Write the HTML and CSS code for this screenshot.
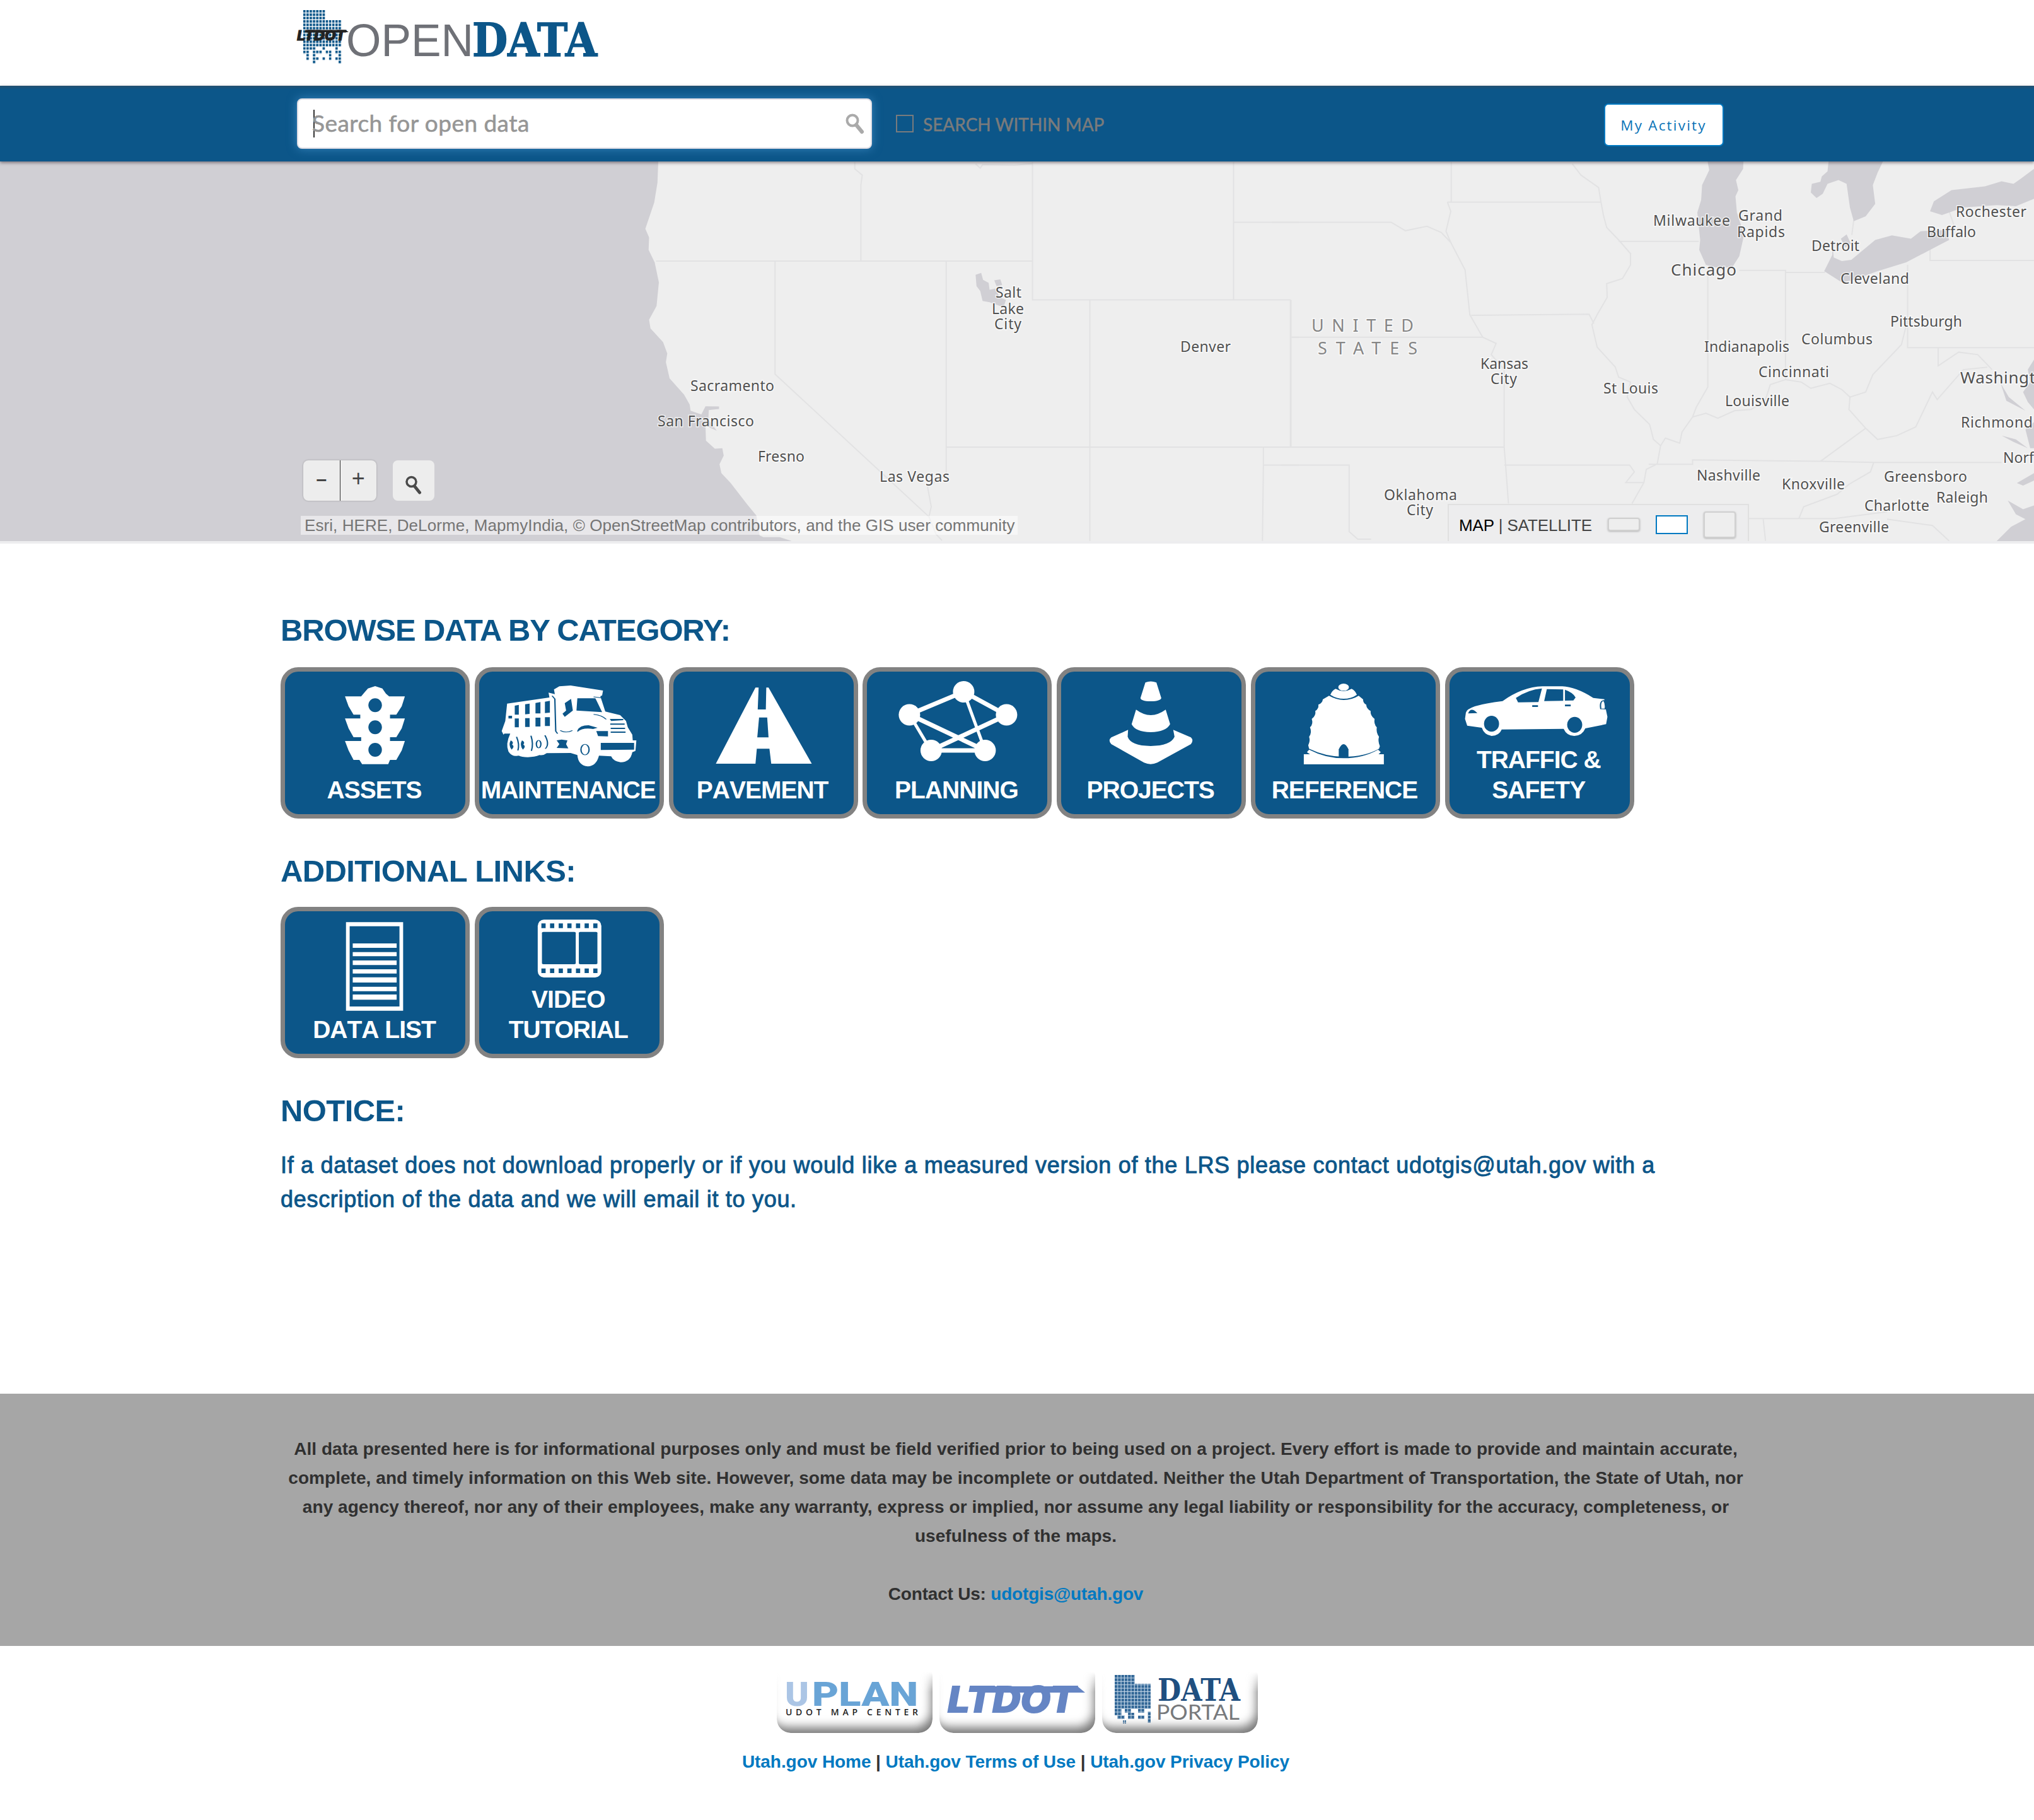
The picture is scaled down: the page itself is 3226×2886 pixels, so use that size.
FILE: index.html
```html
<!DOCTYPE html>
<html lang="en">
<head>
<meta charset="utf-8">
<title>UDOT Open Data</title>
<link rel="stylesheet" href="styles.css">
</head>
<body>
<header class="masthead">
  <svg class="logo" viewBox="465 0 500 136" role="img" aria-label="UDOT Open Data">
    <defs>
      <pattern id="dots" x="481" y="16" width="5.1" height="5.35" patternUnits="userSpaceOnUse"><rect width="3.7" height="4" fill="#0c5689"/></pattern>
    </defs>
    <path fill="url(#dots)" d="M481 16H516V32H542V74H536V79H531V74H516V79H511V74H501V79H481Z"/>
    <path fill="url(#dots)" d="M481 80.2H491V90H486V85.500H481ZM496 80.200H511V85.500H501V90H496ZM516 80.200H526V90H521V85.500H516ZM531 80.200H542V90H536V85.500H531ZM486 90.900H491V96H486ZM496 90.900H506V96H501V101H496ZM511 90.900H516V96H511ZM521 90.900H526V96H521ZM531 90.900H542V101H537V96H531Z"/>
    <text class="logo-udot" x="471" y="63.500" textLength="77" lengthAdjust="spacingAndGlyphs">LTDOT</text>
    <path d="M488 47.500H548L553 51H487Z" fill="#222"/>
    <text class="logo-open" x="549" y="89" textLength="202" lengthAdjust="spacingAndGlyphs">OPEN</text>
    <text class="logo-data" x="749" y="89" textLength="198" lengthAdjust="spacingAndGlyphs">DATA</text>
  </svg>
</header>

<nav class="searchbar">
  <div class="search-box">
    <span class="caret"></span>
    <span class="placeholder">Search for open data</span>
    <svg class="glass" viewBox="0 0 30 33"><circle cx="11" cy="11" r="8.500" fill="none" stroke="#aaa" stroke-width="4"/><path d="M17 18L26 29" stroke="#aaa" stroke-width="6" stroke-linecap="round"/></svg>
  </div>
  <div class="within"><span class="checkbox"></span><span class="within-text">SEARCH WITHIN MAP</span></div>
  <a class="activity">My Activity</a>
</nav>

<section class="map">
  <svg class="basemap" viewBox="0 256 3226 602">
    <g transform="translate(900 250) scale(.7398 .3954)">
      <path class="water" d="M-1300 0H195L193 100 186 180 167 285 175 320 174 370 187 420 196 500 191 595 175 650 178 685 205 740 214 785 211 820 219 885 250 950 262 990 264 1015 287 1030 296 1080 297 1135 316 1167 332 1165 335 1195 326 1230 330 1265 350 1305 385 1390 405 1435 412 1515 420 1522 455 1522 480 1537V1560H-1300Z"/>
      <path class="water" d="M262 1020L287 1030 296 997 325 998 325 1008 303 1012 302 1050 320 1095 296 1075ZM875 470L887 462 891 490 903 502 905 530 918 525 926 560 940 570 935 600 920 590 905 580 890 575 885 535 877 515ZM915 492L928 488 932 510 920 515Z"/>
      <path class="border" d="M190 415H997M629 415V110L632 70 616 45V18M997 18V570H1550M1428 18V570M1428 259H1568M445 415V868L775 1440M812 415V1270L772 1320 780 1400 775 1440 790 1510 803 1535M812 1161H1568M1120 570V1537M1550 570V1161M1550 720H1568M1492 1161V1233L1490 1537M1492 1233H1568M875 25L885 42 890 28 960 30 997 24"/>
    </g>
    <g transform="translate(2040 250) scale(.7564 .3954)">
      <path class="border" d="M-30 259H220L250 293 295 275 325 300 345 340 375 450 385 630 412 720 440 745 430 790 457 850V1161L460 1233 466 1387M346 18V178M338 178H660M338 178L345 215 335 295 345 340M600 25L618 70 655 120 660 178 665 230 672 280 697 330 722 385V430L705 485 672 505 673 560 652 630 641 670 652 760 690 840 697 880 722 900 715 960 730 1010 762 1070 770 1130 785 1155 778 1228 755 1250 750 1303 725 1387M388 632L635 628 645 665M10 570V1161M10 720H412M-10 1161H457M-10 1233H132V1500L150 1530H178M457 1233H720L730 1260 712 1303H750M760 1230H852V1212L1125 1218 1232 1222H1500M697 336H865M884 440V920L860 1000 852 1040 830 1100 825 1145 795 1125 785 1155M950 452H1047V890M1047 460H1130M852 1040L880 1025 905 1045 940 1015 975 1010 1005 970 1015 910 1047 890 1080 900 1100 925 1140 905 1165 930 1182 960 1215 940 1230 870 1260 810 1290 750 1303 650M1303 430V762H1568M1350 350V412H1568M1182 960L1180 1010 1215 1085 1120 1218M1215 1085L1240 1130 1280 1115 1320 1080 1355 940 1365 970 1420 850 1470 840M1367 762V835L1410 780 1450 790 1480 850M1232 1222L1225 1260 1180 1310 1155 1350 1085 1400 1075 1447M970 1447H1150L1260 1420M1000 1447L1005 1537M1260 1450L1355 1475 1390 1537M1190 250L1186 310M1390 215L1400 270"/>
      <path class="water" d="M882 0L887 50 872 110 870 170 862 220 868 330 866 370 880 430 900 440H935L950 395 960 310 945 220 942 155 948 130 943 90 958 45 959 0Z"/>
      <path class="water" d="M1138 0L1135 55 1123 75 1120 97 1102 105 1100 140 1112 162 1125 145 1135 105 1158 90 1175 105 1182 200 1190 255 1215 235 1235 185 1230 110 1240 60 1255 0Z"/>
      <path class="water" d="M1145 340L1148 400 1165 415 1185 410 1235 330 1270 312 1310 325 1330 295 1385 290 1390 330 1350 370 1300 420 1240 455 1190 490 1165 500 1128 455 1145 390ZM1163 325L1175 308 1184 345 1172 360Z"/>
      <path class="water" d="M1350 215L1358 175 1395 130 1465 115 1500 95 1525 105 1540 85 1568 45V165L1530 195 1490 190 1420 200 1375 230Z"/>
      <path class="water" d="M1568 810L1555 850 1560 900 1545 940 1555 980 1568 1010ZM1568 1060L1550 1090 1560 1165H1568ZM1568 1265V1295L1545 1315 1532 1305ZM1568 1395L1545 1410 1513 1375 1530 1430 1550 1450 1520 1480 1478 1560H1568ZM1498 905L1515 960 1550 1015 1510 975ZM1500 1115L1530 1130 1555 1165 1525 1140Z"/>
    </g>
    <g class="city">
      <text x="1095" y="620" textLength="133">Sacramento</text>
      <text x="1043" y="676" textLength="153">San Francisco</text>
      <text x="1202" y="732" textLength="74">Fresno</text>
      <text x="1395" y="764" textLength="111">Las Vegas</text>
      <text x="1579" y="472" textLength="41">Salt</text>
      <text x="1573" y="498" textLength="51">Lake</text>
      <text x="1577" y="522" textLength="43">City</text>
      <text x="1872" y="558" textLength="80">Denver</text>
      <text x="2348" y="585" textLength="76">Kansas</text>
      <text x="2364" y="609" textLength="42">City</text>
      <text x="2543" y="624" textLength="87">St Louis</text>
      <text x="2622" y="358" textLength="122">Milwaukee</text>
      <text x="2757" y="350" textLength="70">Grand</text>
      <text x="2755" y="376" textLength="76">Rapids</text>
      <text x="2873" y="398" textLength="76">Detroit</text>
      <text x="2919" y="450" textLength="109">Cleveland</text>
      <text x="3102" y="344" textLength="112">Rochester</text>
      <text x="3056" y="376" textLength="78">Buffalo</text>
      <text x="2998" y="518" textLength="114">Pittsburgh</text>
      <text x="2857" y="546" textLength="113">Columbus</text>
      <text x="2703" y="558" textLength="135">Indianapolis</text>
      <text x="2789" y="598" textLength="112">Cincinnati</text>
      <text x="2736" y="644" textLength="102">Louisville</text>
      <text x="3110" y="678" textLength="114">Richmond</text>
      <text x="3177" y="734">Norfolk</text>
      <text x="2691" y="762" textLength="101">Nashville</text>
      <text x="2826" y="776" textLength="100">Knoxville</text>
      <text x="2988" y="764" textLength="132">Greensboro</text>
      <text x="2957" y="810" textLength="103">Charlotte</text>
      <text x="3071" y="797" textLength="82">Raleigh</text>
      <text x="2885" y="844" textLength="111">Greenville</text>
      <text x="2195" y="793" textLength="116">Oklahoma</text>
      <text x="2231" y="817" textLength="42">City</text>
      <text class="large" x="2650" y="437" textLength="104">Chicago</text>
      <text class="large" x="3109" y="608" textLength="152">Washington</text>
      <text class="country" x="2080" y="526" textLength="162">UNITED</text>
      <text class="country" x="2090" y="562" textLength="158">STATES</text>
    </g>
  </svg>
  <div class="map-tools">
    <div class="zoom-pair"><span class="zoom-btn zoom-out">–</span><span class="zoom-btn">+</span></div>
    <div class="find-btn"><svg viewBox="0 0 26 30"><circle cx="9.500" cy="10" r="7.500" fill="none" stroke="#4a4a4a" stroke-width="3.500"/><path d="M14.500 17L22.500 27" stroke="#4a4a4a" stroke-width="5" stroke-linecap="round"/></svg></div>
  </div>
  <div class="attribution">Esri, HERE, DeLorme, MapmyIndia, © OpenStreetMap contributors, and the GIS user community</div>
  <div class="basemap-switch">
    <span class="switch-text"><b>MAP</b> | SATELLITE</span>
    <i class="size size-s"></i><i class="size size-m"></i><i class="size size-l"></i>
  </div>
</section>

<main class="content">
  <h2 class="heading heading-first">BROWSE DATA BY CATEGORY:</h2>
  <div class="tiles">
    <a class="tile">
      <svg class="icon" viewBox="30.800 345 400.400 492" preserveAspectRatio="none"><path d="M215 425L231 414 247 425 255 450 262 463H297L290 510 278 550H264V568H297L290 615 278 657H264V675H297L290 720 278 765H264L260 785H202L196 765H183L172 720 164 675H200V657H183L172 615 164 568H198V550H183L172 510 164 463H200L207 445Z"/><g class="cut"><ellipse cx="231" cy="505" rx="15" ry="33"/><ellipse cx="231" cy="610" rx="15" ry="33"/><ellipse cx="231" cy="717" rx="15" ry="33"/></g></svg>
      <span class="label">ASSETS</span>
    </a>
    <a class="tile">
      <svg class="icon" viewBox="462 345 400.400 492" preserveAspectRatio="none">
        <path d="M524 497L618 468 616 445 630 452 628 430 640 415 665 411 737 435 735 458 731 462 742 535 775 552 788 580 792 610 802 645 803 672H811L809 722 802 728Q798 775 776 776 760 772 755 748L728 745Q722 795 703 796 682 792 680 742L665 732 612 733Q605 745 596 742 585 752 570 752 556 752 550 745 535 752 527 725 520 690 531 640H518L516 645 512 628 520 580Z"/>
        <g class="cut">
          <path d="M541 507L550 503V550H541ZM564 500L574 497V546L564 548ZM587 494L598 490V544H587ZM608 488L619 484V540L608 542ZM541 568H550V610H541ZM564 566H574V608H564ZM587 564H598V606H587ZM608 562H619V604H608ZM527 555H535V568H527Z"/>
          <path d="M680 472H720L735 538 678 530ZM652 495L666 475 670 530 652 560 647 545 655 530Z"/>
          <path d="M752 570H782V576L755 580ZM753 592H785V598H753ZM754 612H786V618H754ZM754 630H787V636H754ZM722 628H748V653L726 652ZM732 684H806V716L732 718ZM680 625Q685 600 705 600L725 612 715 618Q692 610 680 632Z"/>
          <path d="M634 672L645 668 658 672 655 690 660 710 634 708 640 690ZM532 672Q540 680 535 692 542 700 534 716 526 695 532 672ZM557 672Q565 680 560 692 567 700 559 716 551 695 557 672Z"/>
        </g>
        <g class="cutline"><path d="M624 460L630 475 632 628 636 640M642 625Q655 640 669 625M716 465L735 470M716 548Q735 552 744 572M545 655Q552 690 548 720M577 650Q583 690 578 722M608 648Q619 690 609 712"/><ellipse cx="697" cy="716" rx="9" ry="25"/><ellipse cx="594" cy="690" rx="5" ry="18"/></g>
      </svg>
      <span class="label">MAINTENANCE</span>
    </a>
    <a class="tile">
      <svg class="icon" viewBox="892.700 345 400.400 492" preserveAspectRatio="none"><path d="M1075 421H1082L1080 525H1098L1099 421H1104L1200 783H1110L1106 712H1078L1075 783H987Z"/><path class="cut" d="M1083 563H1101L1104 658H1079Z"/></svg>
      <span class="label">PAVEMENT</span>
    </a>
    <a class="tile">
      <svg class="icon" viewBox="1374.600 1065 286 164"><path d="M1442 1133L1528 1097 1596 1134 1476 1190 1562 1190 1442 1133" fill="none" stroke="#fff" stroke-width="7"/><path d="M1442 1133L1476 1190M1528 1097L1562 1190" stroke="#fff" stroke-width="5"/><circle cx="1528" cy="1097" r="17"/><circle cx="1442" cy="1133.500" r="17"/><circle cx="1596" cy="1133.500" r="17"/><circle cx="1476.500" cy="1190" r="17"/><circle cx="1562" cy="1190" r="17"/></svg>
      <span class="label">PLANNING</span>
    </a>
    <a class="tile">
      <svg class="icon" viewBox="232.600 75 407.700 492" preserveAspectRatio="none"><path d="M423 127Q435 116 448 127L459 200Q458 215 435 216 412 215 412 200ZM402 256Q435 308 469 256L479 325Q470 362 435 363 400 362 392 325ZM384 352L346 388Q338 402 346 420L420 508Q435 522 450 508L526 420Q533 402 526 388L486 352 489 385Q480 428 435 429 390 428 383 385Z"/></svg>
      <span class="label">PROJECTS</span>
    </a>
    <a class="tile">
      <svg class="icon" viewBox="671.400 75 407.700 492" preserveAspectRatio="none"><ellipse cx="871" cy="149" rx="12" ry="17"/><path d="M853 157Q845 165 841 185 855 204 871 204 888 204 901 185 897 165 889 157 880 168 871 168 862 168 853 157ZM838 190Q855 210 871 210 890 210 905 190L915 207Q915 225 922 232 923 253 932 262 931 285 941 300 939 325 946 340 944 365 951 385 948 405 953 430L951 442Q920 480 871 480 830 480 793 442L791 425Q796 405 793 385 800 365 795 340 803 325 799 300 809 285 807 262 815 253 814 232 823 225 824 207ZM781 468H795L788 458 793 446Q830 487 871 487 915 487 949 446L955 458 950 468H962V516H781Z"/><path class="cut" d="M860 482V445Q871 395 882 445V482Z"/></svg>
      <span class="label">REFERENCE</span>
    </a>
    <a class="tile">
      <svg class="icon icon-short" viewBox="1110 75 407.700 348" preserveAspectRatio="none"><path d="M1147 270Q1150 235 1230 215 1275 148 1320 145H1365Q1395 147 1435 200L1460 206 1464 260 1467 290 1464 325 1417 345Q1410 380 1392 381 1375 380 1368 347L1228 350Q1222 380 1205 381 1188 375 1183 342L1150 332 1145 300Z"/><g class="cut"><ellipse cx="1205" cy="323" rx="17" ry="38"/><ellipse cx="1393" cy="328" rx="17" ry="38"/><path d="M1265 221L1260 200Q1288 160 1319 155L1311 220ZM1324 215L1330 158 1367 160V214ZM1371 161Q1390 175 1395 198L1390 212 1371 213ZM1297 235H1310V243H1297ZM1371 232H1384V240H1371ZM1152 274Q1158 240 1173 272Z"/></g><path class="cutline" d="M1452 252Q1449 215 1459 212 1464 230 1462 253Z"/></svg>
      <span class="label">TRAFFIC &amp;<br>SAFETY</span>
    </a>
  </div>

  <h2 class="heading">ADDITIONAL LINKS:</h2>
  <div class="tiles">
    <a class="tile">
      <svg class="icon" viewBox="49.300 315 640.600 492" preserveAspectRatio="none"><path fill-rule="evenodd" d="M266 367H469V788H266ZM279 386V768H456V386Z"/><path d="M290 468H446V489H290ZM290 509H446V529H290ZM290 549H446V571H290ZM290 591H446V611H290ZM290 629H446V654H290ZM290 674H446V695H290ZM290 711H446V736H290Z"/></svg>
      <span class="label">DATA LIST</span>
    </a>
    <a class="tile">
      <svg class="icon icon-short" viewBox="739 315 640.600 348" preserveAspectRatio="none"><rect x="947" y="355" width="226" height="275" rx="22" ry="30"/><g class="cut"><rect x="962" y="413" width="120" height="154" rx="5"/><rect x="1093" y="413" width="66" height="154" rx="5"/></g><path class="holes" d="M960 384H1165M960 598H1165"/></svg>
      <span class="label">VIDEO<br>TUTORIAL</span>
    </a>
  </div>

  <h2 class="heading">NOTICE:</h2>
  <p class="notice">If a dataset does not download properly or if you would like a measured version of the LRS please contact udotgis@utah.gov with a<br>description of the data and we will email it to you.</p>
</main>

<footer>
  <div class="disclaimer">
    All data presented here is for informational purposes only and must be field verified prior to being used on a project. Every effort is made to provide and maintain accurate,<br>
    complete, and timely information on this Web site. However, some data may be incomplete or outdated. Neither the Utah Department of Transportation, the State of Utah, nor<br>
    any agency thereof, nor any of their employees, make any warranty, express or implied, nor assume any legal liability or responsibility for the accuracy, completeness, or<br>
    usefulness of the maps.<br><br>
    <span class="contact">Contact Us: <a class="link">udotgis@utah.gov</a></span>
  </div>
  <div class="badges">
    <div class="badge"><svg viewBox="1232 2648 247 100"><text class="uplan" x="1245" y="2705" textLength="38" lengthAdjust="spacingAndGlyphs" fill="#abc5e5">U</text><text class="uplan" x="1288" y="2705" textLength="168" lengthAdjust="spacingAndGlyphs" fill="#69a4d6">PLAN</text><text class="mapcenter" x="1246" y="2720" textLength="210">UDOT MAP CENTER</text></svg></div>
    <div class="badge"><svg viewBox="1490 2648 247 100"><text class="udot" x="1503" y="2715" textLength="203" lengthAdjust="spacingAndGlyphs">LTDOT</text><path fill="#6585c4" d="M1554 2674H1709L1721 2684H1552Z"/></svg></div>
    <div class="badge"><svg viewBox="1747 2648 247 100">
      <defs><pattern id="dots2" x="1767" y="2656" width="5.300" height="5.400" patternUnits="userSpaceOnUse"><rect width="5.300" height="5.400" fill="#c3d5e6"/><rect width="4.200" height="4.300" fill="#2f6595"/></pattern></defs>
      <path fill="url(#dots2)" d="M1767 2656H1799V2670H1824V2710H1814V2716H1804V2710H1793V2716H1783V2710H1778V2720H1767ZM1771 2720H1783V2726H1771ZM1788 2716H1798V2726H1788ZM1804 2720H1814V2726H1804ZM1819 2714H1824V2732H1819ZM1780 2728H1785V2733H1780Z"/>
      <text class="portal-data" x="1835" y="2697" textLength="131" lengthAdjust="spacingAndGlyphs">DATA</text><text class="portal" x="1833" y="2727" textLength="132" lengthAdjust="spacingAndGlyphs">PORTAL</text></svg></div>
  </div>
  <div class="legal"><a class="link">Utah.gov Home</a> | <a class="link">Utah.gov Terms of Use</a> | <a class="link">Utah.gov Privacy Policy</a></div>
</footer>
</body>
</html>
```
FILE: styles.css
```css
* { box-sizing: border-box; }
body { margin: 0; background: #fff; font-family: "Liberation Sans", Arial, sans-serif; color: #333; overflow-x: hidden; }
svg { display: block; }

.masthead { height: 136px; padding-left: 465px; }
.logo { width: 500px; height: 136px; }
.logo-udot { font: italic 800 22px Inter, sans-serif; fill: #222; stroke: #222; stroke-width: 1px; }
.logo-open { font: 73px "Liberation Sans", sans-serif; fill: #6f7177; }
.logo-data { font: bold 72px "DejaVu Serif", serif; fill: #0c5689; stroke: #0c5689; stroke-width: 1.500px; }

.searchbar { position: relative; z-index: 2; display: flex; align-items: center; height: 120px; padding: 0 492px 0 471px; background: linear-gradient(#24506f, #0c5689 6px); box-shadow: 0 2px 5px rgba(60, 50, 60, .6); }
.search-box { display: flex; align-items: center; width: 912px; height: 80px; padding: 0 10px 0 24px; background: #fff; border: 2px solid #dcdce4; border-radius: 8px; box-shadow: 0 0 16px rgba(80, 160, 220, .6); }
.caret { width: 2px; height: 44px; margin-right: -4px; background: #333; }
.placeholder { flex: 1; padding-bottom: 3px; font: 37px Lato, sans-serif; color: #969696; -webkit-text-stroke: .6px #969696; letter-spacing: .45px; }
.glass { width: 30px; height: 33px; }
.within { display: flex; align-items: center; gap: 15px; margin-left: 38px; }
.checkbox { width: 28px; height: 28px; border: 2px solid #797b7d; }
.within-text { font: 28px Lato, sans-serif; color: #7b7b7b; -webkit-text-stroke: .5px #7b7b7b; padding-top: 2px; }
.activity { display: flex; align-items: center; justify-content: center; width: 190px; height: 68px; margin: 4px 0 0 auto; padding-right: 1px; background: #fff; border: 2px solid #0079c1; border-radius: 7px; font: 500 22.500px "Open Sans", sans-serif; letter-spacing: 2.200px; color: #0a73b7; white-space: nowrap; }

.map { position: relative; height: 606px; background: #eee; overflow: hidden; border-bottom: 4px solid #ededef; }
.basemap { width: 3226px; height: 602px; }
.water { fill: #d0cfd4; }
.border { fill: none; stroke: #e2e2e3; stroke-width: 2px; vector-effect: non-scaling-stroke; }
.city { font: 23px "Noto Sans", sans-serif; fill: #505050; stroke: rgba(255, 255, 255, .7); stroke-width: 3px; paint-order: stroke; }
.large { font-size: 26px; }
.country { font-size: 27px; fill: #868686; }
.map-tools { position: absolute; left: 481px; top: 474px; display: flex; gap: 26px; }
.zoom-pair { display: flex; width: 116px; height: 64px; background: #ededed; border-radius: 8px; box-shadow: 0 0 3px rgba(0, 0, 0, .25); }
.zoom-btn { flex: 1; text-align: center; font: 36px/58px "Liberation Sans", sans-serif; color: #444; }
.zoom-btn + .zoom-btn { border-left: 1px solid #333; }
.zoom-out { font-size: 30px; font-weight: bold; line-height: 59px; }
.find-btn { display: flex; width: 66px; height: 64px; padding: 24px 0 0 20px; background: #ededed; border-radius: 8px; }
.find-btn svg { width: 26px; height: 30px; }
.attribution { position: absolute; left: 477px; top: 562px; width: 1137px; height: 30px; padding-left: 6px; background: rgba(255, 255, 255, .5); font-size: 26px; line-height: 31px; letter-spacing: .07px; color: #757575; white-space: nowrap; }
.basemap-switch { position: absolute; left: 2296px; top: 543px; display: flex; align-items: center; width: 478px; height: 63px; padding: 0 19px 0 16px; background: #ededee; border: 2px solid #e0e0e0; border-bottom: 0; }
.switch-text { width: 237px; padding-top: 3px; font-size: 26px; letter-spacing: -.1px; color: #444; white-space: nowrap; }
.switch-text b { font-weight: normal; color: #000; }
.size { width: 51px; background: #eee; border: 2px solid #d0d0d0; border-radius: 4px; box-shadow: 0 1px 3px rgba(0, 0, 0, .25); }
.size + .size { margin-left: 25px; }
.size-s { height: 21px; }
.size-m { height: 30px; background: #fff; border-color: #0079c1; border-radius: 0; box-shadow: none; }
.size-l { height: 42px; }

.content { height: 1348px; padding: 104px 0 0 445px; }
.heading { height: 92px; margin: 0; font-size: 49px; line-height: 70px; letter-spacing: -.6px; color: #0c5689; white-space: nowrap; }
.heading-first { line-height: 66px; letter-spacing: -1.150px; }
.tiles { display: flex; gap: 7.800px; height: 288px; }
.tile { display: flex; flex-direction: column; width: 300px; height: 240px; background: #0c5689; border: 7px solid #828282; border-radius: 28px; }
.icon { flex: none; width: 286px; height: 164px; fill: #fff; }
.icon-short { height: 116px; }
.cut { fill: #0c5689; }
.cutline { fill: none; stroke: #0c5689; stroke-width: 3px; }
.holes { stroke: #0c5689; stroke-width: 22px; stroke-dasharray: 15 15.700; }
.label { margin: 0 -5px 0 -8px; text-align: center; font-size: 39px; font-weight: bold; line-height: 48px; letter-spacing: -1px; font-kerning: none; color: #fff; white-space: nowrap; }
.notice { margin: 0; padding-top: 3px; font-size: 36px; line-height: 54px; letter-spacing: .7px; color: #0c5689; -webkit-text-stroke: .9px #0c5689; white-space: nowrap; }

.disclaimer { height: 400px; padding: 65px 4px 0 0; background: #a6a6a6; text-align: center; font-size: 28px; font-weight: bold; line-height: 46px; letter-spacing: .05px; color: #303030; white-space: nowrap; }
.contact { letter-spacing: -.2px; }
.link { color: #0079c1; }
.badges { display: flex; justify-content: center; gap: 11px; height: 138px; padding-top: 38px; }
.badge { display: grid; width: 247px; height: 100px; }
.badge::before { content: ""; grid-area: 1 / 1; border-radius: 8px 8px 22px 22px; box-shadow: inset -7px -14px 16px -5px #777; -webkit-mask-image: linear-gradient(transparent 3%, #000 35%); mask-image: linear-gradient(transparent 3%, #000 35%); }
.badge svg { grid-area: 1 / 1; width: 247px; height: 100px; }
.uplan { font: 900 54px Roboto, sans-serif; }
.mapcenter { font: 600 14px "Open Sans", sans-serif; fill: #222; }
.udot { font: italic 800 56px Inter, sans-serif; fill: #6585c4; stroke: #6585c4; stroke-width: 2px; }
.portal-data { font: bold 49px "DejaVu Serif", serif; fill: #1f4f80; }
.portal { font: 32px Lato, sans-serif; fill: #77797c; }
.legal { height: 138px; padding: 23px 4px 0 0; text-align: center; font-size: 28px; font-weight: bold; line-height: 46px; letter-spacing: -.07px; white-space: nowrap; }
```
